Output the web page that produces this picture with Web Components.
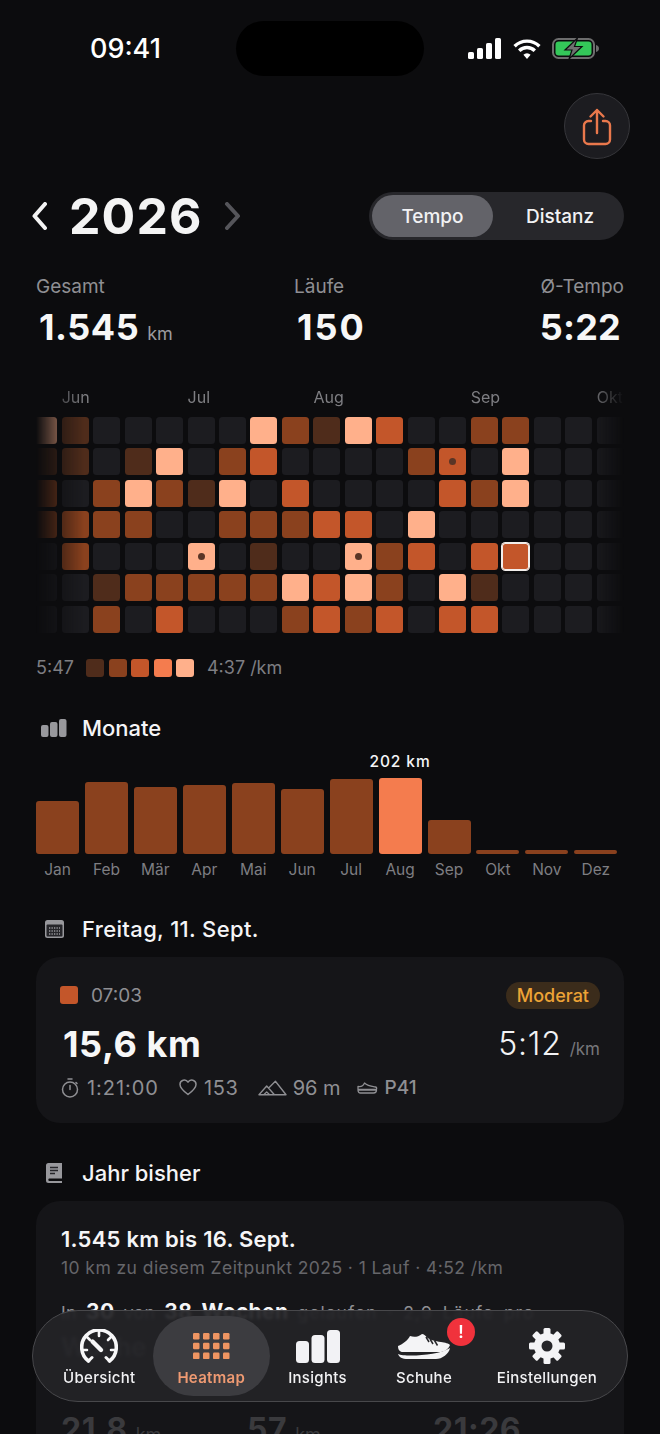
<!DOCTYPE html>
<html lang="de">
<head>
<meta charset="utf-8">
<title>Heatmap</title>
<style>
  html, body { margin: 0; background: #0c0c0e; }
  body { font-family: Inter, "Noto Sans", sans-serif; color: #f5f5f7; }
  app-screen { width: 660px; height: 1434px; }
</style>
</head>
<body>
<app-screen>
  <status-bar></status-bar>
  <year-header></year-header>
  <year-stats></year-stats>
  <pace-heatmap></pace-heatmap>
  <section-head title="Monate" icon="bars" style="margin-top:37px"></section-head>
  <month-bars></month-bars>
  <section-head title="Freitag, 11. Sept." icon="calendar" style="margin-top:35px;letter-spacing:.35px"></section-head>
  <run-card></run-card>
  <section-head title="Jahr bisher" icon="book" style="margin-top:36px"></section-head>
  <year-card></year-card>
  <tab-bar></tab-bar>
</app-screen>

<script>
class AppScreen extends HTMLElement {
  constructor() {
    super();
    this.attachShadow({ mode: "open" });
    this.shadowRoot.innerHTML = `
      <style>
        :host { display: block; position: relative; overflow: hidden; background: #0c0c0e; }
      </style>
      <slot></slot>`;
  }
}

class StatusBar extends HTMLElement {
  constructor() {
    super();
    this.attachShadow({ mode: "open" });
    this.shadowRoot.innerHTML = `
      <style>
        :host { display: flex; height: 72px; padding: 21px 0 0 90px; box-sizing: border-box; }
        .time { width: 146px; height: 55px; line-height: 55px; font-size: 27px; font-weight: 500; color: #fff; }
        .island { width: 188px; height: 55px; border-radius: 28px; background: #000; }
        .icons { display: flex; align-items: center; height: 55px; margin-left: 44px; }
        svg { display: block; }
        .wifi { margin-left: 12px; }
        .batt { margin-left: 11px; }
      </style>
      <div class="time">09:41</div>
      <div class="island"></div>
      <div class="icons">
        <svg width="33" height="21" viewBox="0 0 33 21" fill="#fff">
          <rect x="0" y="14" width="6" height="7" rx="1.6"/>
          <rect x="9" y="10" width="6" height="11" rx="1.6"/>
          <rect x="18" y="5" width="6" height="16" rx="1.6"/>
          <rect x="27" y="0" width="6" height="21" rx="1.6"/>
        </svg>
        <svg class="wifi" width="28" height="20" viewBox="0 0 28 20" fill="none" stroke="#fff" stroke-width="3.4">
          <path d="M1.6 7.2a17.6 17.6 0 0 1 24.8 0"/>
          <path d="M6.2 11.8a11 11 0 0 1 15.6 0"/>
          <path d="M14 20l-3.6-4.2a5 5 0 0 1 7.2 0z" fill="#fff" stroke="none"/>
        </svg>
        <svg class="batt" width="47" height="21" viewBox="0 0 47 21">
          <rect x="1" y="1" width="41" height="19" rx="5.5" fill="none" stroke="#6d6d6d" stroke-width="2"/>
          <path d="M44 7c1.8.4 3 1.8 3 3.5s-1.2 3.1-3 3.5z" fill="#6d6d6d"/>
          <rect x="3.5" y="3.5" width="36" height="14" rx="3.2" fill="#34c759"/>
          <path d="M25.5 0L13 12h7l-3 9 13-12.5h-7.5z" fill="#6f7170" stroke="#0c0c0e" stroke-width="1.2"/>
        </svg>
      </div>`;
  }
}

class YearHeader extends HTMLElement {
  constructor() {
    super();
    this.attachShadow({ mode: "open" });
    this.shadowRoot.innerHTML = `
      <style>
        :host { display: block; }
        .actions { display: flex; justify-content: flex-end; margin: 21px 30px 33px 0; }
        .share { width: 66px; height: 66px; box-sizing: border-box; border-radius: 50%; background: #1c1c20;
          border: 1px solid #36363a; display: flex; align-items: center; justify-content: center; }
        .share svg { margin-top: 2px; }
        .row { display: flex; align-items: center; height: 48px; padding: 0 36px 0 32px; }
        .year { font-size: 50px; line-height: 48px; font-weight: 700; letter-spacing: 1.1px; color: #f4f4f4; margin: 0 21px 0 22px; }
        svg { display: block; }
        .seg { margin-left: auto; width: 255px; height: 48px; box-sizing: border-box; padding: 3px; border-radius: 24px;
          background: #27272b; display: flex; font-size: 19px; font-weight: 500; color: #f2f2f4; }
        .seg div { display: flex; align-items: center; justify-content: center; }
        .on { width: 121px; border-radius: 21px; background: #636369; }
        .off { flex: 1; padding-left: 6px; }
      </style>
      <div class="actions">
        <div class="share">
          <svg width="30" height="38" viewBox="0 0 30 38" fill="none" stroke="#e9784c" stroke-width="2.4" stroke-linecap="round" stroke-linejoin="round">
            <path d="M9 13H6.5A4.5 4.5 0 0 0 2 17.5v14A4.5 4.5 0 0 0 6.5 36h17a4.5 4.5 0 0 0 4.5-4.5v-14A4.5 4.5 0 0 0 23.5 13H21"/>
            <path d="M15 25V2M8.5 8.5L15 2l6.5 6.5"/>
          </svg>
        </div>
      </div>
      <div class="row">
        <svg width="15" height="28" viewBox="0 0 15 28" fill="none" stroke="#f4f4f4" stroke-width="4" stroke-linecap="round" stroke-linejoin="round"><path d="M13 2L2.5 14 13 26"/></svg>
        <div class="year">2026</div>
        <svg width="17" height="28" viewBox="0 0 17 28" fill="none" stroke="#55555a" stroke-width="4" stroke-linecap="round" stroke-linejoin="round"><path d="M3 2l11 12L3 26"/></svg>
        <div class="seg"><div class="on">Tempo</div><div class="off">Distanz</div></div>
      </div>`;
  }
}

class YearStats extends HTMLElement {
  constructor() {
    super();
    this.attachShadow({ mode: "open" });
    this.shadowRoot.innerHTML = `
      <style>
        :host { display: grid; grid-template-columns: 258px 1fr auto; padding: 0 36px; margin-top: 36px; }
        .label { font-size: 19px; line-height: 22px; color: #8f8f93; }
        .value { font-size: 36px; line-height: 40px; height: 40px; font-weight: 700; color: #f7f7f7; margin-top: 9px; padding-left: 3px; white-space: nowrap; }
        .value small { font-size: 18px; line-height: 0; font-weight: 400; letter-spacing: 0; color: #9b9b9f; margin-left: 8px; }
        .last { text-align: right; }
        .last .value { margin-right: 3px; letter-spacing: .2px; padding-left: 0; }
      </style>
      <div><div class="label">Gesamt</div><div class="value" style="letter-spacing:.5px">1.545<small>km</small></div></div>
      <div><div class="label">Läufe</div><div class="value" style="letter-spacing:2px">150</div></div>
      <div class="last"><div class="label">Ø-Tempo</div><div class="value">5:22</div></div>`;
  }
}

// 0 = kein Lauf, 1-5 = Tempostufe, "d" = Marker, "s" = ausgewählt
const HEAT_ROWS = [
  "5 1 0 0 0 0 0 5 2 1 5 3 0 0 2 2 0 0 0",
  "1 1 0 1 5 0 2 3 0 0 0 0 2 3d 0 5 0 0 0",
  "2 0 2 5 2 1 5 0 3 0 0 0 0 3 2 5 0 0 0",
  "2 2 2 2 0 0 2 2 2 3 3 0 5 0 0 0 0 0 0",
  "0 2 0 0 0 5d 0 1 0 0 5d 2 3 0 3 3s 0 0 0",
  "0 0 1 2 2 2 2 2 5 3 5 2 0 5 1 0 0 0 0",
  "0 0 2 0 3 0 0 0 2 3 2 3 0 3 3 0 0 0 0",
];
const HEAT_COLORS = ["#1c1c20", "#4f2c1b", "#8a411e", "#c3562a", "#f47c4e", "#ffb08b"];

class PaceHeatmap extends HTMLElement {
  constructor() {
    super();
    this.attachShadow({ mode: "open" });
    const cells = HEAT_ROWS.map((row) => row.split(" ").map((c) => {
      const level = parseInt(c);
      const mark = c.endsWith("d") ? '<i></i>' : "";
      const sel = c.endsWith("s") ? " sel" : "";
      return `<div class="cell${sel}" style="background:${HEAT_COLORS[level]}">${mark}</div>`;
    }).join("")).join("");
    const swatches = HEAT_COLORS.slice(1).map((c) => `<span style="background:${c}"></span>`).join("");
    this.shadowRoot.innerHTML = `
      <style>
        :host { display: block; margin-top: 40px; }
        .fade { width: 588px; margin-left: 36px; overflow: hidden;
          -webkit-mask-image: linear-gradient(90deg, transparent 0, #000 48px, #000 554px, transparent 588px);
          mask-image: linear-gradient(90deg, transparent 0, #000 48px, #000 554px, transparent 588px); }
        .grid, .months { display: grid; grid-template-columns: repeat(19, 27px); column-gap: 4.47px; margin-left: -5.8px; width: 594px; }
        .months { height: 20px; margin-bottom: 10px; font-size: 16px; line-height: 20px; color: #7e7e82; }
        .months span { white-space: nowrap; grid-row: 1; }
        .grid { row-gap: 4.47px; padding: 2px 0; margin-top: -2px; margin-bottom: -2px; }
        .cell { height: 27px; border-radius: 3.5px; display: flex; align-items: center; justify-content: center; }
        .cell i { width: 7px; height: 7px; border-radius: 50%; background: #5a3526; }
        .sel { box-shadow: 0 0 0 1px #f2eeeb, inset 0 0 0 1px #f2eeeb; }
        .legend { display: flex; align-items: center; height: 18px; margin: 26px 0 0 36px; font-size: 18px; color: #7e7e82; }
        .legend div { display: flex; gap: 4.5px; margin: 0 12.5px; }
        .legend span { width: 18px; height: 18px; border-radius: 3px; }
      </style>
      <div class="fade">
        <div class="months">
          <span style="grid-column:2">Jun</span>
          <span style="grid-column:6">Jul</span>
          <span style="grid-column:10">Aug</span>
          <span style="grid-column:15">Sep</span>
          <span style="grid-column:19">Okt</span>
        </div>
        <div class="grid">${cells}</div>
      </div>
      <div class="legend">5:47<div>${swatches}</div>4:37 /km</div>`;
  }
}

const HEAD_ICONS = {
  bars: `<svg width="26" height="18" viewBox="0 0 26 18" fill="#98989c">
      <rect x="0" y="6" width="7.5" height="12" rx="2"/><rect x="9" y="3" width="7.5" height="15" rx="2"/><rect x="18" y="0" width="7.5" height="18" rx="2"/></svg>`,
  calendar: `<svg width="26" height="18" viewBox="0 0 26 18">
      <rect x="4" y="0" width="19" height="18" rx="2.5" fill="#98989c"/>
      <rect x="5.5" y="4.5" width="16" height="12" rx="1" fill="#26262a"/>
      <path d="M8 8h11M8 11h11M8 14h11" stroke="#98989c" stroke-width="1.3" stroke-dasharray="1.3 1.2"/></svg>`,
  book: `<svg width="26" height="20" viewBox="0 0 26 20">
      <path d="M5 2.5A2.5 2.5 0 0 1 7.5 0H21v15.5H8a1.5 1.5 0 0 0 0 2.5h13v2H7.5A2.5 2.5 0 0 1 5 17.5z" fill="#98989c"/>
      <path d="M9 4.5h8M9 7.5h8M9 10.5h5" stroke="#26262a" stroke-width="1.6"/></svg>`,
};

class SectionHead extends HTMLElement {
  constructor() {
    super();
    this.attachShadow({ mode: "open" });
    this.shadowRoot.innerHTML = `
      <style>
        :host { display: flex; align-items: center; height: 28px; padding-left: 41px; font-size: 22px; font-weight: 500; color: #f5f5f7; }
        .ic { width: 41px; display: flex; align-items: center; }
        svg { display: block; }
      </style>
      <div class="ic">${HEAD_ICONS[this.getAttribute("icon")]}</div>
      <div>${this.getAttribute("title")}</div>`;
  }
}

const MONTHS = [
  ["Jan", 53], ["Feb", 72], ["Mär", 67], ["Apr", 69], ["Mai", 71], ["Jun", 65],
  ["Jul", 75], ["Aug", 76], ["Sep", 34], ["Okt", 3.5], ["Nov", 3.5], ["Dez", 3.5],
];

class MonthBars extends HTMLElement {
  constructor() {
    super();
    this.attachShadow({ mode: "open" });
    const cols = MONTHS.map(([name, h]) => {
      const top = name === "Aug";
      return `<div class="col">
        ${top ? '<div class="val">202 km</div>' : ""}
        <div class="bar${top ? " top" : ""}" style="height:${h}px"></div>
        <div class="name">${name}</div>
      </div>`;
    }).join("");
    this.shadowRoot.innerHTML = `
      <style>
        :host { display: grid; grid-template-columns: repeat(12, 43px); column-gap: 5.95px; margin: 10px 0 0 36px; height: 128px; }
        .col { display: flex; flex-direction: column; justify-content: flex-end; align-items: stretch; min-width: 0; }
        .bar { background: #8a411e; border-radius: 3px; }
        .top { background: #f47c4e; }
        .val { font-size: 15.5px; line-height: 20px; font-weight: 500; letter-spacing: .9px; color: #f5f5f7; text-align: center; margin: 0 -10px 6px; white-space: nowrap; }
        .name { margin-top: 6px; height: 20px; line-height: 20px; font-size: 15.5px; color: #7e7e82; text-align: center; }
      </style>
      ${cols}`;
  }
}

class RunCard extends HTMLElement {
  constructor() {
    super();
    this.attachShadow({ mode: "open" });
    this.shadowRoot.innerHTML = `
      <style>
        :host { display: block; margin: 14px 36px 0; height: 166px; box-sizing: border-box; padding: 25px 24px 0; border-radius: 24px; background: #151518; }
        .top, .mid, .meta { display: flex; align-items: center; }
        .top { height: 27px; font-size: 19px; color: #8f8f93; }
        .sq { width: 18px; height: 18px; border-radius: 3px; background: #c3562a; margin-right: 13px; }
        .badge { margin-left: auto; height: 27px; line-height: 27px; padding: 0 11px; border-radius: 14px; background: #3b2c1b; color: #eda336; font-size: 18px; font-weight: 500; }
        .mid { margin-top: 13px; height: 44px; justify-content: space-between; }
        .dist { font-size: 36px; font-weight: 700; color: #f7f7f7; letter-spacing: .6px; padding-left: 3px; }
        .pace { display: flex; align-items: baseline; gap: 8px; font-size: 32px; font-weight: 300; color: #f2f2f4; letter-spacing: .8px; }
        .pace small { font-size: 17px; color: #77777b; letter-spacing: 0; font-weight: 400; }
        .meta { margin-top: 10px; height: 24px; padding-left: 1px; font-size: 20px; color: #8f8f93; }
        .meta svg { display: block; flex: none; }
      </style>
      <div class="top"><div class="sq"></div>07:03<div class="badge">Moderat</div></div>
      <div class="mid"><div class="dist">15,6 km</div><div class="pace">5:12<small>/km</small></div></div>
      <div class="meta">
        <svg width="18" height="20" viewBox="0 0 18 20" fill="none" stroke="#8f8f93" stroke-width="1.5" stroke-linecap="round" style="margin-right:8px"><circle cx="9" cy="11.5" r="7.5"/><path d="M9 11.5V7.5M7 1h4M15 4.5l1 1"/></svg>
        <span style="margin-right:20px;letter-spacing:.95px">1:21:00</span>
        <svg width="18" height="17" viewBox="0 0 18 17" fill="none" stroke="#8f8f93" stroke-width="1.5" stroke-linejoin="round" style="margin-right:7px"><path d="M9 15.5C3 11 1 8.5 1 5.5A4.3 4.3 0 0 1 9 3.2 4.3 4.3 0 0 1 17 5.5c0 3-2 5.5-8 10z"/></svg>
        <span style="margin-right:19px;letter-spacing:.7px">153</span>
        <svg width="29" height="16" viewBox="0 0 30 16" fill="none" stroke="#8f8f93" stroke-width="1.4" stroke-linejoin="round" style="margin-right:6px"><path d="M1 15L9 6l8 9zM11 8l7-7 11 14H17M6 15l3-3 3 3"/></svg>
        <span style="margin-right:16px;white-space:nowrap">96 m</span>
        <svg width="21" height="12" viewBox="0 0 21 12" fill="none" stroke="#8f8f93" stroke-width="1.3" stroke-linejoin="round" style="margin-right:7px"><path d="M1 4.5c2.5.5 5 0 6.5-3.5 3 3 8 3.5 11 4 1.500.3 1.500 2 .5 2.500H1zM1 8h18.500c0 2-1.500 3-3 3H3.500C2 11 1 10 1 8z"/></svg>
        <span style="font-weight:500;font-size:19px">P41</span>
      </div>`;
  }
}

class YearCard extends HTMLElement {
  constructor() {
    super();
    this.attachShadow({ mode: "open" });
    this.shadowRoot.innerHTML = `
      <style>
        :host { display: block; margin: 14px 36px 0; height: 300px; box-sizing: border-box; padding: 24px 24px 0 25px; border-radius: 24px; background: #151518; }
        .h { font-size: 22px; line-height: 28px; font-weight: 600; letter-spacing: .25px; color: #f5f5f7; }
        .s { font-size: 17.5px; line-height: 22px; color: #66666a; letter-spacing: .43px; margin-top: 4px; white-space: nowrap; }
        .w { font-size: 17.5px; line-height: 22px; color: #8f8f93; margin-top: 23px; white-space: nowrap; letter-spacing: .35px; word-spacing: 4px; }
        .w b { color: #f5f5f7; font-size: 21px; line-height: 0; font-weight: 700; }
        .w span { letter-spacing: 1px; }
        .w2 { font-size: 25px; font-weight: 700; line-height: 28px; color: #55555a; margin-top: 9px; }
        .nums { display: grid; grid-template-columns: 186px 186px auto; margin-top: 51px; font-size: 32px; line-height: 36px; height: 36px; letter-spacing: .5px; font-weight: 700; color: #3a3a3d; }
        .nums small { font-size: 18px; line-height: 0; font-weight: 400; letter-spacing: 0; }
      </style>
      <div class="h">1.545 km bis 16. Sept.</div>
      <div class="s">10 km zu diesem Zeitpunkt 2025 · 1 Lauf · 4:52 /km</div>
      <div class="w">In <b>30</b> von <b>38</b> <b>Wochen</b> <span>gelaufen · 2,9 Läufe pro</span></div>
      <div class="w2">Woche</div>
      <div class="nums"><div>21,8 <small>km</small></div><div>57 <small>km</small></div><div>21:26</div></div>`;
  }
}

class TabBar extends HTMLElement {
  constructor() {
    super();
    this.attachShadow({ mode: "open" });
    const dots = [];
    for (let r = 0; r < 3; r++) {
      for (let c = 0; c < 4; c++) {
        dots.push(`<rect x="${c * 10}" y="${r * 9.8}" width="6.5" height="6.5" rx="1.2"/>`);
      }
    }
    let teeth = "";
    for (let i = 0; i < 8; i++) {
      teeth += `<rect x="14.5" y="0" width="7" height="8" rx="1.5" transform="rotate(${i * 45} 18 18)"/>`;
    }
    this.shadowRoot.innerHTML = `
      <style>
        :host { position: absolute; left: 32px; top: 1310px; width: 596px; height: 92px; box-sizing: border-box;
          border: 1px solid #48484b; border-radius: 46px; background: rgba(35,35,39,.93); -webkit-backdrop-filter: blur(1.5px); backdrop-filter: blur(1.5px);
          display: grid; grid-template-columns: 106.5px 117.5px 95px 118px 128px; padding: 5px 0 5px 13px;
          color: #f2f2f4; font-size: 15px; font-weight: 500; letter-spacing: .3px; }
        .tab { position: relative; display: flex; flex-direction: column; align-items: center; justify-content: flex-end; padding-bottom: 8px; border-radius: 40px; }
        .tab svg { display: block; }
        .ic { height: 36px; display: flex; align-items: center; justify-content: center; margin-bottom: 4px; }
        .label { line-height: 20px; white-space: nowrap; }
        .on { background: #3c3c40; color: #ef9a72; font-weight: 600; }
        .badge { position: absolute; left: 82px; top: 2px; width: 28px; height: 28px; border-radius: 50%; background: #f0323c; color: #fff;
          display: flex; align-items: center; justify-content: center; font-size: 17px; font-weight: 600; letter-spacing: 0; }
      </style>
      <div class="tab">
        <div class="ic">
          <svg width="38" height="34" viewBox="0 0 38 34" fill="none" stroke="#f7f7f8" stroke-width="3.6" stroke-linecap="round">
            <path d="M8.5 32A17.3 17.3 0 1 1 29.5 32"/>
            <path d="M8.5 32l3.5-3.5M29.5 32l-3.5-3.5" stroke-width="3"/>
            <path d="M19 2.5v4.5M7 8l3 3M31 8l-3 3M3 21h4M31 21h4" stroke-width="2.6"/>
            <path d="M12.5 12.5L21 21" stroke-width="4.4"/>
          </svg>
        </div>
        <div class="label">Übersicht</div>
      </div>
      <div class="tab on">
        <div class="ic"><svg width="37" height="26" viewBox="0 0 37 26" fill="#ef9562">${dots.join("")}</svg></div>
        <div class="label">Heatmap</div>
      </div>
      <div class="tab">
        <div class="ic">
          <svg width="44" height="33" viewBox="0 0 44 33" fill="#f2f2f5" style="margin-left:1px">
            <rect x="0" y="11" width="13" height="22" rx="3.5"/><rect x="15.5" y="5" width="13" height="28" rx="3.5"/><rect x="31" y="0" width="13" height="33" rx="3.5"/>
          </svg>
        </div>
        <div class="label">Insights</div>
      </div>
      <div class="tab">
        <div class="ic">
          <svg width="52" height="25" viewBox="0 0 52 25" fill="#f4f4f6">
            <path d="M0 12C5 10 10 6 12 2c4 1.5 8 1 12-2 2 0 3 1.5 5 3.5 4 3 8 3.5 14 4.5 4 .7 8 1.5 9 3-1 3-4 6-9 7H5c-3.5 0-5-2.5-5-6z"/>
            <path d="M0 20c6 3 40 2 52-6-1 6-8 11-14 11H10c-6 0-9-2-10-5z"/>
            <path d="M28 3l3 5M32 5l3 5M36.5 6.5l3 5" stroke="#26262a" stroke-width="1.5" fill="none"/>
          </svg>
        </div>
        <div class="label">Schuhe</div>
        <div class="badge">!</div>
      </div>
      <div class="tab">
        <div class="ic">
          <svg width="36" height="36" viewBox="0 0 36 36">
            <g fill="#f4f4f6">${teeth}<circle cx="18" cy="18" r="13"/></g>
            <circle cx="18" cy="18" r="5.5" fill="#26262a"/>
          </svg>
        </div>
        <div class="label">Einstellungen</div>
      </div>`;
  }
}

customElements.define("app-screen", AppScreen);
customElements.define("status-bar", StatusBar);
customElements.define("year-header", YearHeader);
customElements.define("year-stats", YearStats);
customElements.define("pace-heatmap", PaceHeatmap);
customElements.define("section-head", SectionHead);
customElements.define("month-bars", MonthBars);
customElements.define("run-card", RunCard);
customElements.define("year-card", YearCard);
customElements.define("tab-bar", TabBar);
</script>
</body>
</html>
